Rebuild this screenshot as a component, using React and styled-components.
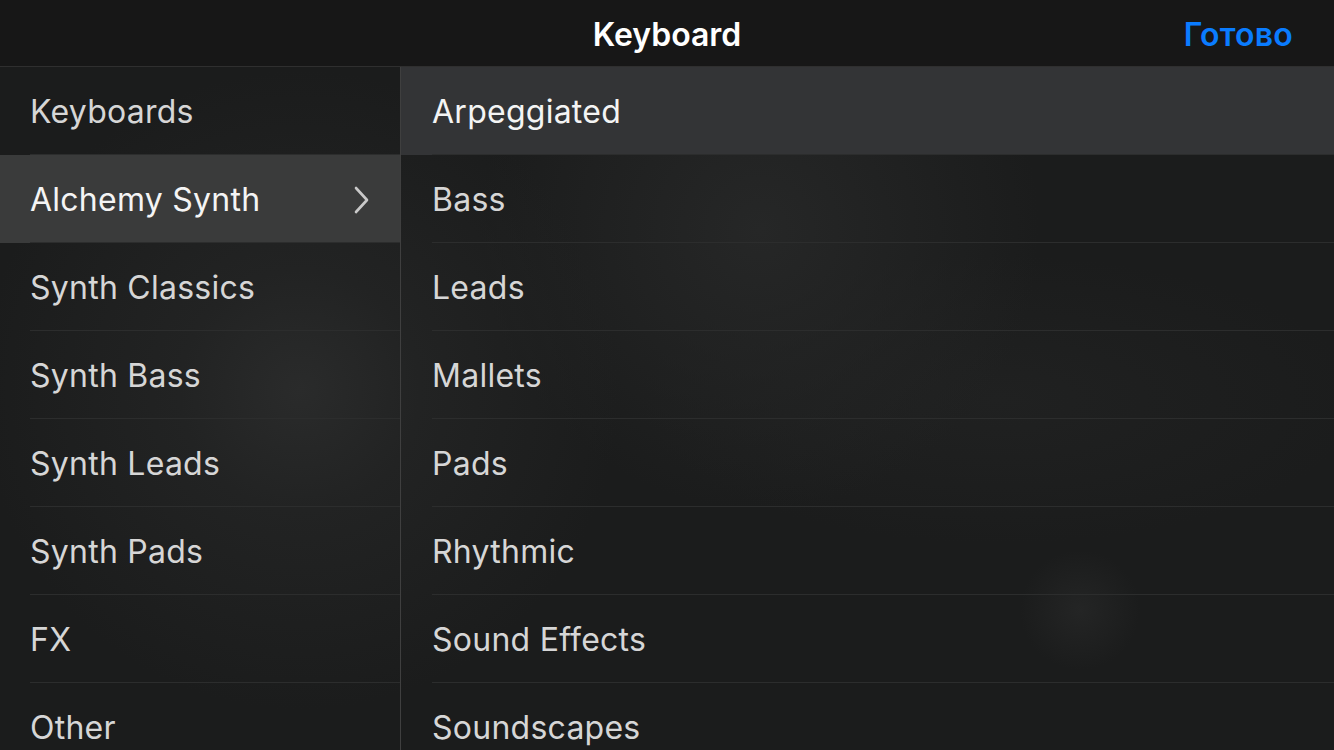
import React from 'react';
import styled, { createGlobalStyle, css } from 'styled-components';

const GlobalStyle = createGlobalStyle`
  html, body {
    margin: 0;
    padding: 0;
    background: #1c1d1d;
    font-family: Inter, "Noto Sans", sans-serif;
    -webkit-font-smoothing: antialiased;
  }
`;

const categories = [
  'Keyboards',
  'Alchemy Synth',
  'Synth Classics',
  'Synth Bass',
  'Synth Leads',
  'Synth Pads',
  'FX',
  'Other',
];

const subcategories = [
  'Arpeggiated',
  'Bass',
  'Leads',
  'Mallets',
  'Pads',
  'Rhythmic',
  'Sound Effects',
  'Soundscapes',
];

const Chevron = () => (
  <svg width="18" height="28" viewBox="0 0 18 28" fill="none">
    <path d="M4 2 L15 14 L4 26" stroke="#c9c9c9" strokeWidth="2.6" strokeLinecap="round" strokeLinejoin="round" />
  </svg>
);

const App = () => {
  const selectedCategory = 'Alchemy Synth';
  const selectedSub = 'Arpeggiated';

  return (
    <Screen>
      <GlobalStyle />
      <Header>
        <Title>Keyboard</Title>
        <DoneButton>Готово</DoneButton>
      </Header>
      <Body>
        <Column width="400px" divider>
          {categories.map((name) => (
            <Row key={name} selected={name === selectedCategory} tone="light">
              <RowInner inset="30px">
                <RowLabel selected={name === selectedCategory}>{name}</RowLabel>
                {name === selectedCategory && <Chevron />}
              </RowInner>
            </Row>
          ))}
        </Column>
        <Column>
          {subcategories.map((name) => (
            <Row key={name} selected={name === selectedSub} tone="dark">
              <RowInner inset="31px">
                <RowLabel selected={name === selectedSub}>{name}</RowLabel>
              </RowInner>
            </Row>
          ))}
        </Column>
      </Body>
    </Screen>
  );
};

const Screen = styled.div`
  width: 1334px;
  height: 750px;
  overflow: hidden;
  display: flex;
  flex-direction: column;
  background:
    radial-gradient(circle at 300px 390px, #2a2b2b 0, #222323 120px, transparent 320px),
    radial-gradient(circle at 760px 230px, #262727 0, transparent 280px),
    radial-gradient(circle at 1080px 610px, #242525 0, transparent 60px),
    radial-gradient(ellipse at 1000px 400px, #202121 0, transparent 360px),
    #1b1c1c;
`;

const Header = styled.div`
  height: 66px;
  flex-shrink: 0;
  background: #171717;
  border-bottom: 1px solid #2f2f2f;
  display: flex;
  align-items: center;
  justify-content: center;
  position: relative;
`;

const Title = styled.h1`
  margin: 0;
  padding-top: 2px;
  color: #ffffff;
  font-size: 32px;
  font-weight: 600;
  letter-spacing: 0;
`;

const DoneButton = styled.span`
  position: absolute;
  right: 41px;
  top: 50%;
  transform: translateY(-50%);
  padding-top: 2px;
  color: #0a7cff;
  font-size: 32px;
  font-weight: 600;
  letter-spacing: 0.2px;
  cursor: pointer;
`;

const Body = styled.div`
  flex: 1;
  display: flex;
`;

const Column = styled.div`
  display: flex;
  flex-direction: column;
  ${(p) => (p.width ? css`width: ${p.width};` : css`flex: 1;`)}
  ${(p) => p.divider && css`border-right: 1px solid #3f3f3f;`}
`;

const Row = styled.div`
  height: 88px;
  flex-shrink: 0;
  ${(p) => p.selected && css`
    background: ${p.tone === 'light' ? '#3a3b3b' : '#333436'};
  `}
`;

const RowInner = styled.div`
  height: 100%;
  box-sizing: border-box;
  margin-left: ${(p) => p.inset};
  padding-right: 30px;
  padding-top: 2px;
  border-bottom: 1px solid #2c2d2d;
  display: flex;
  align-items: center;
  justify-content: space-between;
`;

const RowLabel = styled.span`
  font-size: 32px;
  font-weight: 400;
  color: ${(p) => (p.selected ? '#f4f4f4' : '#d6d6d6')};
  letter-spacing: 0.25px;
`;

export default App;
